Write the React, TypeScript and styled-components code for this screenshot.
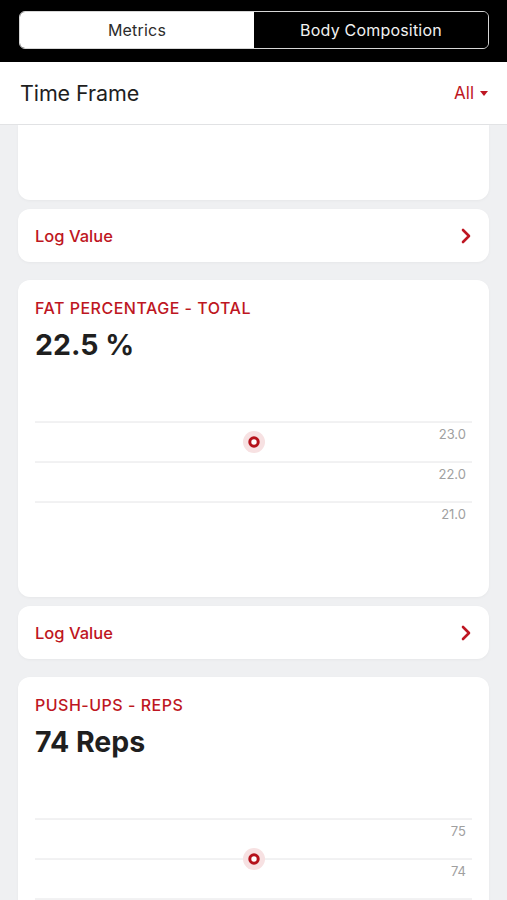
import React from "react";
import styled, { createGlobalStyle } from "styled-components";

const RED = "#be1622";

const Global = createGlobalStyle`
  html, body { margin: 0; padding: 0; }
  body {
    background: #eff0f2;
    font-family: Inter, "Noto Sans", "Liberation Sans", sans-serif;
    -webkit-font-smoothing: antialiased;
  }
  #root { height: 900px; overflow: hidden; }
`;

const Page = styled.div`
  display: flex;
  flex-direction: column;
  height: 900px;
  overflow: hidden;
  & > * { flex-shrink: 0; }
`;

const TopBar = styled.div`
  background: #000;
  height: 62px;
  display: flex;
  align-items: flex-start;
  padding: 11px 18px 0 19px;
  box-sizing: border-box;
`;

const Segmented = styled.div`
  flex: 1;
  display: flex;
  height: 38px;
  border: 1px solid #d6d6d6;
  border-radius: 6px;
  overflow: hidden;
  box-sizing: border-box;
`;

const Segment = styled.div<{ $active?: boolean }>`
  flex: 1;
  display: flex;
  align-items: center;
  justify-content: center;
  background: ${(p) => (p.$active ? "#fff" : "#000")};
  color: ${(p) => (p.$active ? "#2b2b2b" : "#f2f2f2")};
  font-size: 16px;
  letter-spacing: 0.2px;
`;

const FrameBar = styled.div`
  height: 63px;
  background: #fff;
  border-bottom: 1px solid #e2e3e5;
  display: flex;
  align-items: center;
  justify-content: space-between;
  padding: 0 19px 0 20px;
  box-sizing: border-box;
`;

const FrameTitle = styled.div`
  font-size: 21.5px;
  color: #1e1e1e;
  letter-spacing: -0.1px;
`;

const FrameSelect = styled.div`
  display: flex;
  align-items: center;
  gap: 6px;
  color: ${RED};
  font-size: 17px;
`;

const Caret = styled.span`
  width: 0;
  height: 0;
  border-left: 4.5px solid transparent;
  border-right: 4.5px solid transparent;
  border-top: 5px solid ${RED};
`;

const List = styled.div`
  display: flex;
  flex-direction: column;
  padding: 0 18px 0 18px;
  & > * { flex-shrink: 0; }
`;

const Card = styled.div<{ $tail?: boolean; $gap?: number }>`
  background: #fff;
  border-radius: ${(p) => (p.$tail ? "0 0 12px 12px" : "12px")};
  margin-top: ${(p) => p.$gap ?? 0}px;
  box-shadow: 0 1px 3px rgba(0, 0, 0, 0.04);
`;

const TailCard = styled(Card)`
  height: 75px;
`;

const LogRow = styled(Card)`
  height: 53px;
  display: flex;
  align-items: center;
  justify-content: space-between;
  padding: 0 17px;
  box-sizing: border-box;
`;

const LogText = styled.div`
  color: ${RED};
  font-size: 16.5px;
  font-weight: 500;
`;

const MetricCard = styled(Card)`
  height: 317px;
  padding: 18px 17px 0;
  box-sizing: border-box;
  display: flex;
  flex-direction: column;
  overflow: hidden;
`;

const MetricTitle = styled.div`
  color: ${RED};
  font-size: 16px;
  font-weight: 500;
  line-height: 20px;
  letter-spacing: 0.5px;
`;

const MetricValue = styled.div`
  color: #1f1f1f;
  font-size: 28.5px;
  font-weight: 700;
  line-height: 34px;
  margin-top: 10px;
  letter-spacing: 0;
`;

const ChartSvg = styled.svg`
  display: block;
  flex-shrink: 0;
  width: 437px;
  height: 235px;
  overflow: visible;
`;

const Chevron = () => (
  <svg width="12" height="16" viewBox="0 0 12 16">
    <path d="M3 2 L9 8 L3 14" fill="none" stroke={RED} strokeWidth="2.6" strokeLinecap="round" strokeLinejoin="round" />
  </svg>
);

type ChartProps = { labels: string[]; lines: number; dotY: number };

const Chart = ({ labels, lines, dotY }: ChartProps) => (
  <ChartSvg viewBox="0 0 437 235">
    {Array.from({ length: lines }).map((_, i) => {
      const y = 60 + i * 40;
      const l = labels[i];
      return (
        <g key={i}>
          <line x1="0" x2="437" y1={y} y2={y} stroke="#e4e4e6" strokeWidth="1" />
          {l && (
            <text
              x="431"
              y={y + 17}
              textAnchor="end"
              fontSize="13"
              fill="#a0a0a0"
              fontFamily='Inter, "Noto Sans", sans-serif'
            >
              {l}
            </text>
          )}
        </g>
      );
    })}
    <circle cx="219" cy={dotY} r="11" fill="#f7e1e2" />
    <circle cx="219" cy={dotY} r="4.2" fill="#fff" stroke="#b5121b" strokeWidth="3" />
  </ChartSvg>
);

const LogValue = ({ gap }: { gap: number }) => (
  <LogRow $gap={gap}>
    <LogText>Log Value</LogText>
    <Chevron />
  </LogRow>
);

export default function App() {
  return (
    <>
      <Global />
      <Page>
        <TopBar>
          <Segmented>
            <Segment $active>Metrics</Segment>
            <Segment>Body Composition</Segment>
          </Segmented>
        </TopBar>
        <FrameBar>
          <FrameTitle>Time Frame</FrameTitle>
          <FrameSelect>
            All <Caret />
          </FrameSelect>
        </FrameBar>
        <List>
          <TailCard $tail />
          <LogValue gap={9} />
          <MetricCard $gap={18}>
            <MetricTitle>FAT PERCENTAGE - TOTAL</MetricTitle>
            <MetricValue>22.5 %</MetricValue>
            <Chart labels={["23.0", "22.0", "21.0"]} lines={3} dotY={80} />
          </MetricCard>
          <LogValue gap={9} />
          <MetricCard $gap={18}>
            <MetricTitle>PUSH-UPS - REPS</MetricTitle>
            <MetricValue>74 Reps</MetricValue>
            <Chart labels={["75", "74"]} lines={3} dotY={100} />
          </MetricCard>
        </List>
      </Page>
    </>
  );
}
